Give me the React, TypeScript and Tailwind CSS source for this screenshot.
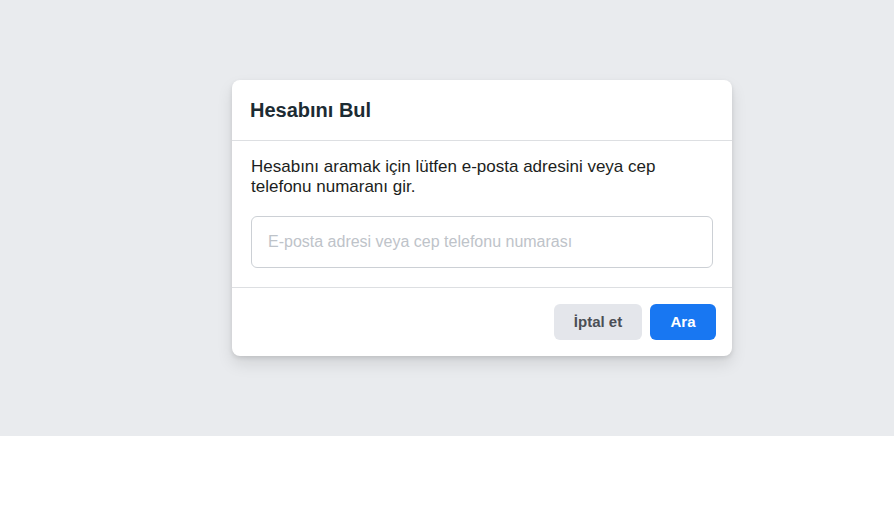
export default function App() {
  return (
    <div className="w-[894px] h-[508px] bg-white" style={{ fontFamily: '"Liberation Sans", Arial, sans-serif' }}>
      <div className="h-[436px] bg-[#e9ebee] flex pl-[232px] pt-[80px]">
        <div className="w-[500px] h-[276px] bg-white rounded-lg shadow-[0_2px_4px_rgba(0,0,0,0.1),0_8px_16px_rgba(0,0,0,0.1)] flex flex-col">
          <div className="h-[61px] border-b border-[#dddfe2] flex items-center pl-[18px]">
            <h2 className="text-[20px] leading-6 font-bold text-[#1c2b33]">Hesabını Bul</h2>
          </div>
          <div className="px-[19px] pt-[16px] pb-[19px] border-b border-[#dddfe2]">
            <p className="text-[17px] leading-5 text-[#1c1e21]">
              Hesabını aramak için lütfen e-posta adresini veya cep telefonu numaranı gir.
            </p>
            <input
              className="mt-[19px] w-full h-[52px] rounded-md border border-[#ccd0d5] px-4 text-[16px] text-[#1c1e21] placeholder:text-[#bec3c9] outline-none"
              placeholder="E-posta adresi veya cep telefonu numarası"
            />
          </div>
          <div className="flex justify-end gap-2 px-4 pt-4">
            <button className="w-[88px] h-9 rounded-md bg-[#e4e6eb] text-[15px] font-bold text-[#4b4f56]">İptal et</button>
            <button className="w-[66px] h-9 rounded-md bg-[#1877f2] text-[15px] font-bold text-white">Ara</button>
          </div>
        </div>
      </div>
    </div>
  );
}
